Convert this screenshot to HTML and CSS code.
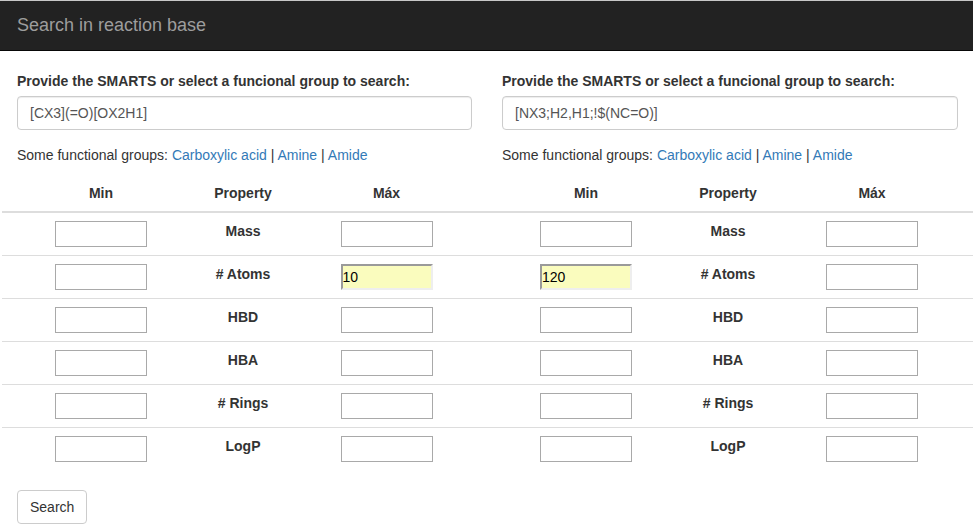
FILE: index.html
```html
<!DOCTYPE html>
<html>
<head>
<meta charset="utf-8">
<link rel="stylesheet" href="styles.css">
</head>
<body>
<nav class="navbar">
  <span class="brand">Search in reaction base</span>
</nav>
<main class="page">
  <section class="col col-left">
    <div class="pad">
      <label class="lbl">Provide the SMARTS or select a funcional group to search:</label>
      <input class="smarts" type="text" value="[CX3](=O)[OX2H1]">
      <p class="groups">Some functional groups: <a href="#">Carboxylic acid</a> | <a href="#">Amine</a> | <a href="#">Amide</a></p>
    </div>
    <table class="props">
      <colgroup><col class="c1"><col class="c2"><col></colgroup>
      <thead><tr><th>Min</th><th>Property</th><th>Máx</th></tr></thead>
      <tbody>
        <tr><td><input class="num"></td><th>Mass</th><td><input class="num"></td></tr>
        <tr><td><input class="num"></td><th># Atoms</th><td><input class="num filled" value="10"></td></tr>
        <tr><td><input class="num"></td><th>HBD</th><td><input class="num"></td></tr>
        <tr><td><input class="num"></td><th>HBA</th><td><input class="num"></td></tr>
        <tr><td><input class="num"></td><th># Rings</th><td><input class="num"></td></tr>
        <tr><td><input class="num"></td><th>LogP</th><td><input class="num"></td></tr>
      </tbody>
    </table>
    <div class="pad">
      <button class="btn">Search</button>
    </div>
  </section>
  <section class="col">
    <div class="pad">
      <label class="lbl">Provide the SMARTS or select a funcional group to search:</label>
      <input class="smarts" type="text" value="[NX3;H2,H1;!$(NC=O)]">
      <p class="groups">Some functional groups: <a href="#">Carboxylic acid</a> | <a href="#">Amine</a> | <a href="#">Amide</a></p>
    </div>
    <table class="props">
      <colgroup><col class="c1"><col class="c2"><col></colgroup>
      <thead><tr><th>Min</th><th>Property</th><th>Máx</th></tr></thead>
      <tbody>
        <tr><td><input class="num"></td><th>Mass</th><td><input class="num"></td></tr>
        <tr><td><input class="num filled" value="120"></td><th># Atoms</th><td><input class="num"></td></tr>
        <tr><td><input class="num"></td><th>HBD</th><td><input class="num"></td></tr>
        <tr><td><input class="num"></td><th>HBA</th><td><input class="num"></td></tr>
        <tr><td><input class="num"></td><th># Rings</th><td><input class="num"></td></tr>
        <tr><td><input class="num"></td><th>LogP</th><td><input class="num"></td></tr>
      </tbody>
    </table>
  </section>
</main>
</body>
</html>
```
FILE: styles.css
```css
* { box-sizing: border-box; }
html, body { margin: 0; padding: 0; }
body {
  font-family: "Liberation Sans", Arial, Helvetica, sans-serif;
  font-size: 14px;
  line-height: 20px;
  color: #333;
  background: #fff;
}
.navbar {
  height: 51px;
  background: #222;
  border-top: 1px solid #c8c8c8;
  border-bottom: 1px solid #080808;
  padding-left: 17px;
  margin-bottom: 20px;
}
.brand {
  display: block;
  font-size: 18px;
  line-height: 20px;
  color: #9d9d9d;
  padding-top: 14px;
}
.page {
  display: flex;
  padding-left: 2px;
}
.col { flex: 1 1 0; min-width: 0; }
.col-left { flex: 0 0 485px; }
.pad { padding: 0 15px; }
.lbl {
  display: block;
  font-weight: bold;
  margin-bottom: 5px;
}
.smarts {
  display: block;
  width: 100%;
  height: 34px;
  padding: 6px 12px;
  font-family: inherit;
  font-size: 14px;
  color: #555;
  border: 1px solid #ccc;
  border-radius: 4px;
  box-shadow: inset 0 1px 1px rgba(0,0,0,.075);
  margin-bottom: 15px;
  outline: none;
}
.groups { margin: 0 0 10px; }
.groups a { color: #337ab7; text-decoration: none; }
.props {
  width: 100%;
  border-collapse: collapse;
  border-spacing: 0;
  margin-bottom: 20px;
}
.props .c1 { width: 198px; }
.props .c2 { width: 86px; }
.props th, .props td {
  padding: 8px;
  text-align: center;
  vertical-align: top;
  line-height: 20px;
}
.props th { font-weight: bold; }
.props thead th {
  border-bottom: 2px solid #ddd;
  vertical-align: bottom;
}
.props tbody td, .props tbody th { border-top: 1px solid #ddd; }
.num {
  display: inline-block;
  vertical-align: top;
  width: 92px;
  height: 26px;
  border: 1px solid #a9a9a9;
  background: #fff;
  padding: 1px 1px;
  font-family: "Liberation Sans", Arial, sans-serif;
  font-size: 14px;
  color: #000;
  outline: none;
}
.num.filled {
  background: #fafcbe;
  border: 2px solid;
  border-color: #9a9a9a #eeeeee #eeeeee #9a9a9a;
  padding: 1px 0;
}
.btn {
  display: inline-block;
  height: 34px;
  padding: 6px 12px;
  font-family: inherit;
  font-size: 14px;
  line-height: 20px;
  color: #333;
  background: #fff;
  border: 1px solid #ccc;
  border-radius: 4px;
}
```
